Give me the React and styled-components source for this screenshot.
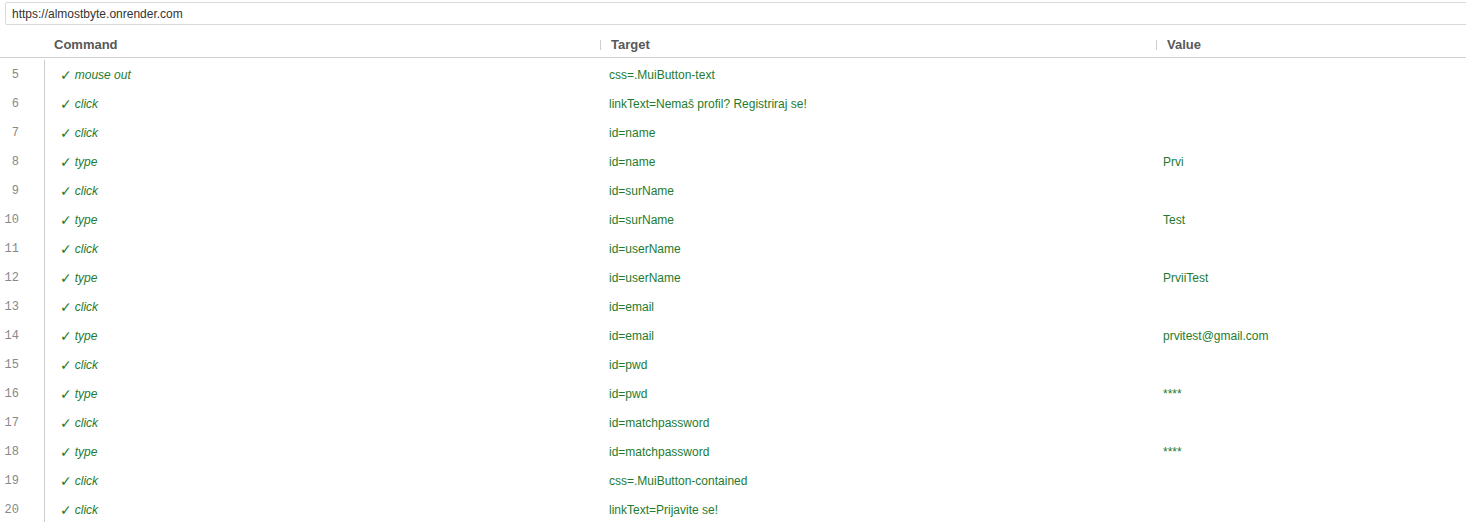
import styled, { createGlobalStyle } from "styled-components";

const GlobalStyle = createGlobalStyle`
  body {
    margin: 0;
    background: #fff;
    font-family: "Liberation Sans", Arial, sans-serif;
  }
`;

const commands = [
  { n: 5, cmd: "mouse out", target: "css=.MuiButton-text", value: "" },
  { n: 6, cmd: "click", target: "linkText=Nemaš profil? Registriraj se!", value: "" },
  { n: 7, cmd: "click", target: "id=name", value: "" },
  { n: 8, cmd: "type", target: "id=name", value: "Prvi" },
  { n: 9, cmd: "click", target: "id=surName", value: "" },
  { n: 10, cmd: "type", target: "id=surName", value: "Test" },
  { n: 11, cmd: "click", target: "id=userName", value: "" },
  { n: 12, cmd: "type", target: "id=userName", value: "PrviiTest" },
  { n: 13, cmd: "click", target: "id=email", value: "" },
  { n: 14, cmd: "type", target: "id=email", value: "prvitest@gmail.com" },
  { n: 15, cmd: "click", target: "id=pwd", value: "" },
  { n: 16, cmd: "type", target: "id=pwd", value: "****" },
  { n: 17, cmd: "click", target: "id=matchpassword", value: "" },
  { n: 18, cmd: "type", target: "id=matchpassword", value: "****" },
  { n: 19, cmd: "click", target: "css=.MuiButton-contained", value: "" },
  { n: 20, cmd: "click", target: "linkText=Prijavite se!", value: "" },
];

const Page = styled.div`
  width: 1466px;
  height: 522px;
  overflow: hidden;
  padding-top: 2px;
  box-sizing: border-box;
`;

const UrlBar = styled.div`
  margin-left: 5px;
  width: 1480px;
  height: 23px;
  box-sizing: border-box;
  border: 1px solid #dadada;
  border-radius: 2px;
  display: flex;
  align-items: center;
  padding-left: 6px;
  font-size: 12px;
  color: #333;
`;

const HeaderRow = styled.div`
  display: grid;
  grid-template-columns: 44px 556px 556px 1fr;
  height: 31px;
  align-items: center;
  border-bottom: 1px solid #d0d0d0;
  margin-top: 1px;
`;

const HeadCell = styled.div`
  display: flex;
  align-items: center;
  font-size: 13px;
  font-weight: bold;
  color: #585858;
  padding-left: ${(p) => p.$pad}px;
  padding-top: 6px;
`;

const Divider = styled.span`
  width: 1px;
  height: 10px;
  background: #cfcfcf;
  margin-right: 10px;
`;

const Body = styled.div`
  padding-top: 2px;
  display: grid;
  grid-template-columns: 45px 564px 554px 1fr;
`;

const Row = styled.div`
  display: contents;
`;

const Cell = styled.div`
  height: 29px;
  box-sizing: border-box;
  display: flex;
  align-items: center;
  font-size: 12px;
  color: #1e7b2f;
  white-space: nowrap;
`;

const IndexCell = styled(Cell)`
  justify-content: flex-end;
  padding-right: 25px;
  border-right: 1px solid #cccccc;
  font-family: "Liberation Mono", monospace;
  font-size: 12px;
  color: #888;
`;

const CommandCell = styled(Cell)`
  padding-left: 15px;
  font-style: italic;
`;

const Check = styled.span`
  font-style: normal;
  font-size: 14px;
  margin-right: 3px;
  font-family: "DejaVu Sans", sans-serif;
`;

export default function App() {
  return (
    <Page>
      <GlobalStyle />
      <UrlBar>https://almostbyte.onrender.com</UrlBar>
      <HeaderRow>
        <span />
        <HeadCell $pad={10}>Command</HeadCell>
        <HeadCell $pad={0}>
          <Divider />
          Target
        </HeadCell>
        <HeadCell $pad={0}>
          <Divider />
          Value
        </HeadCell>
      </HeaderRow>
      <Body>
        {commands.map((c) => (
          <Row key={c.n}>
            <IndexCell>{c.n}</IndexCell>
            <CommandCell>
              <Check>✓</Check>
              {c.cmd}
            </CommandCell>
            <Cell>{c.target}</Cell>
            <Cell>{c.value}</Cell>
          </Row>
        ))}
      </Body>
    </Page>
  );
}
